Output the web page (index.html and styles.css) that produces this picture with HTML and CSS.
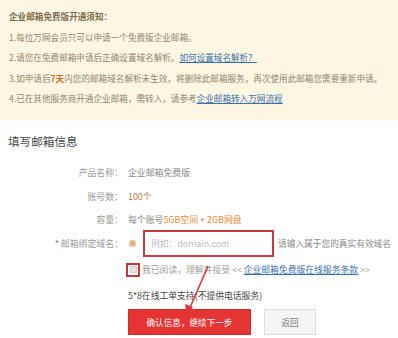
FILE: index.html
```html
<!DOCTYPE html>
<html>
<head>
  <title>企业邮箱免费版</title>
  <link rel="stylesheet" href="styles.css">
</head>
<body>
  <div class="notice">
    <p class="notice-title">企业邮箱免费版开通须知：</p>
    <p>1.每位万网会员只可以申请一个免费版企业邮箱。</p>
    <p>2.请您在免费邮箱申请后正确设置域名解析。<a href="#">如何设置域名解析？</a></p>
    <p>3.如申请后<span class="hot">7天</span>内您的邮箱域名解析未生效，将删除此邮箱服务，再次使用此邮箱您需要重新申请。</p>
    <p>4.已在其他服务商开通企业邮箱，需转入，请参考<a href="#">企业邮箱转入万网流程</a></p>
  </div>

  <div class="main">
    <h2 class="section-title">填写邮箱信息</h2>

    <div class="form">
      <div class="row">
        <span class="label">产品名称：</span>
        <span class="value">企业邮箱免费版</span>
      </div>
      <div class="row">
        <span class="label">账号数：</span>
        <span class="value count">100个</span>
      </div>
      <div class="row">
        <span class="label">容量：</span>
        <span class="value">每个账号<span class="orange">5GB空间</span> + <span class="orange">2GB网盘</span></span>
      </div>
      <div class="row">
        <span class="label"><span class="star">*</span> 邮箱绑定域名：</span>
        <span class="value domain">
          <i class="dot"></i>
          <span class="input">例如：domain.com</span>
          <span class="hint">请输入属于您的真实有效域名</span>
        </span>
      </div>
      <div class="row agree">
        <span class="label"></span>
        <span class="value agree-box">
          <span class="check-mark"><i class="check"></i></span>
          <span class="agree-text">我已阅读，理解并接受 &lt;&lt; <a href="#">企业邮箱免费版在线服务条款</a> &gt;&gt;</span>
        </span>
      </div>
      <div class="row support">
        <span class="label"></span>
        <span class="value">5*8在线工单支持(不提供电话服务)</span>
      </div>
      <div class="buttons">
        <button class="btn-confirm" type="button">确认信息，继续下一步</button>
        <button class="btn-back" type="button">返回</button>
      </div>
    </div>

    <svg class="arrow" width="40" height="60" viewBox="0 0 40 60">
      <line x1="33" y1="4" x2="14" y2="48" stroke="#d9363a" stroke-width="1.6"/>
      <polygon points="12,53 10,42 18,45" fill="#d9363a"/>
    </svg>
  </div>
</body>
</html>
```

FILE: styles.css
```css
body {
  margin: 0;
  font-family: "Noto Sans CJK SC", "Noto Sans", sans-serif;
  background-color: #ffffff;
  color: #666666;
}

a {
  color: #3d6fae;
  text-decoration: underline;
}

/* notice box */

.notice {
  height: 120px;
  box-sizing: border-box;
  padding: 6px 9px 0;
  background-color: #fcf7e2;
  color: #928670;
  font-size: 8.6px;
}

.notice p {
  margin: 0;
  line-height: 20.5px;
  white-space: nowrap;
}

.notice-title {
  font-weight: bold;
  color: #7d6e50;
}

.hot {
  color: #e2631c;
  font-weight: bold;
}

/* form */

.main {
  position: relative;
}

.section-title {
  margin: 0;
  padding: 13px 0 0 8px;
  height: 28px;
  font-size: 11.6px;
  font-weight: normal;
  line-height: 16px;
  color: #444444;
}

.form {
  font-size: 8.9px;
}

.row {
  display: flex;
  align-items: center;
  height: 23.5px;
}

.label {
  width: 123px;
  text-align: right;
  color: #9a9a9a;
  white-space: nowrap;
}

.star {
  color: #777777;
}

.value {
  margin-left: 5px;
  color: #8a8a8a;
  white-space: nowrap;
}

.count {
  color: #b4804f;
}

.orange {
  color: #f08838;
}

.domain,
.agree-box {
  display: flex;
  align-items: center;
}

.domain {
  margin-left: 6px;
}

.dot {
  display: block;
  width: 7px;
  height: 7px;
  border-radius: 50%;
  background-color: #e2a878;
  box-shadow: inset 0 0 0 1.5px #eccbae;
}

.input {
  display: block;
  width: 121px;
  height: 23px;
  margin-left: 7px;
  padding-left: 6px;
  border: 2px solid #c33b3f;
  line-height: 23px;
  color: #bdbdbd;
  font-size: 8.8px;
}

.hint {
  margin-left: 4px;
  color: #8a8a8a;
  font-size: 8.7px;
}

.agree {
  margin-top: 3px;
}

.check-mark {
  display: flex;
  align-items: center;
  justify-content: center;
  width: 10px;
  height: 10px;
  margin-left: -2px;
  border: 2px solid #c7363b;
}

.check {
  display: block;
  width: 7px;
  height: 7px;
  background-color: #e9e4e4;
  border: 1px solid #d6d0d0;
  box-sizing: border-box;
}

.agree-text {
  margin-left: 2px;
  color: #a0a0a0;
  font-size: 8.8px;
}

.support {
  margin-top: 2px;
}

.support .value {
  color: #444444;
  font-size: 8.8px;
}

.buttons {
  display: flex;
  gap: 13px;
  margin: 2px 0 0 128px;
}

.buttons button {
  height: 26px;
  border-radius: 0;
  font-family: "Noto Sans CJK SC", "Noto Sans", sans-serif;
  font-size: 8.6px;
  cursor: pointer;
}

.btn-confirm {
  width: 123px;
  background-color: #e53434;
  border: 1px solid #d02a2a;
  color: #ffffff;
}

.btn-back {
  width: 52px;
  background-color: #f5f5f5;
  border: 1px solid #dddddd;
  color: #777777;
}

.arrow {
  position: absolute;
  left: 175px;
  top: 142px;
}
```
